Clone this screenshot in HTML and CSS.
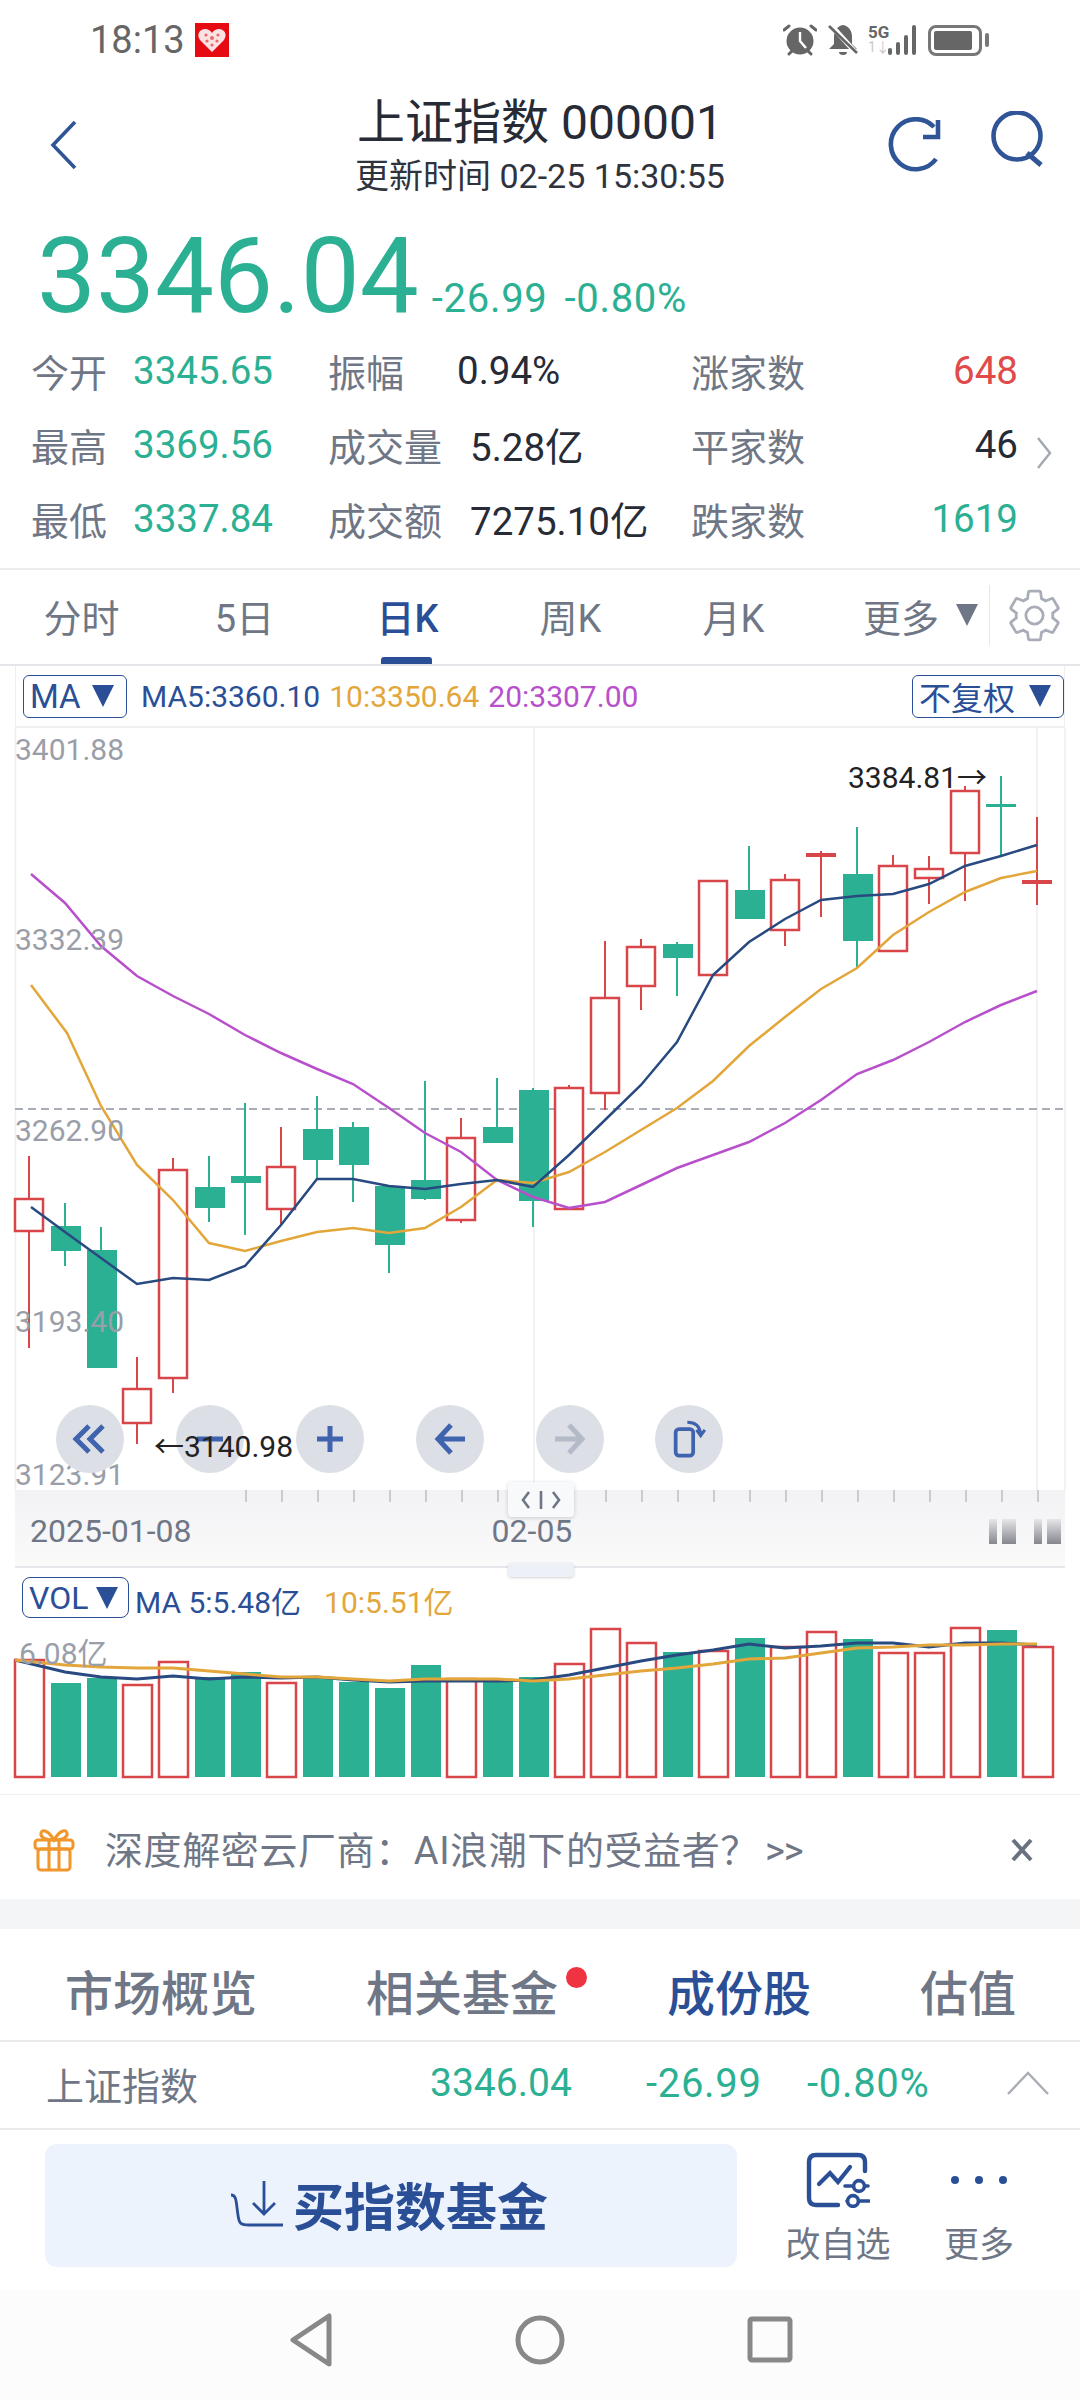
FILE: index.html
```html
<!DOCTYPE html>
<html>
<head>
    <title>上证指数 000001</title>
    <meta name="viewport" content="width=device-width, initial-scale=1">
    <link rel="stylesheet" href="styles.css">
</head>
<body>
    <!-- status bar -->
    <div class="status">
        <span class="clock">18:13</span>
        <svg class="app-badge" viewBox="0 0 34 34">
            <rect width="34" height="34" fill="#e60a12"/>
            <path d="M17 29 L5 17 C1 11 5 6 10 6 C13 6 16 8 17 10 C18 8 21 6 24 6 C29 6 33 11 29 17 Z" fill="#fbe3e4"/>
            <circle cx="11" cy="12" r="1.6" fill="#e86a70"/><circle cx="17" cy="15" r="2" fill="#e86a70"/><circle cx="23" cy="12" r="1.6" fill="#e86a70"/>
            <circle cx="12" cy="18" r="1.6" fill="#e86a70"/><circle cx="22" cy="18" r="1.6" fill="#e86a70"/><circle cx="17" cy="22" r="1.6" fill="#e86a70"/>
        </svg>
        <div class="status-right">
            <svg class="ico-alarm" viewBox="0 0 34 32">
                <circle cx="17" cy="17" r="13.5" fill="#666"/>
                <path d="M17 8 V17 L23 24" fill="none" stroke="#fff" stroke-width="2.4"/>
                <path d="M1 6 L6 2 M33 6 L28 2 M6 30 L9 27 M28 30 L25 27" stroke="#666" stroke-width="3" stroke-linecap="round"/>
            </svg>
            <svg class="ico-bell" viewBox="0 0 30 32">
                <path d="M15 1 C9 2 6 7 6 13 V20 L1 25 H29 L24 20 V13 C24 7 21 2 15 1 Z" fill="#666"/>
                <path d="M11 28 H19 A4 3 0 0 1 11 28 Z" fill="#666"/>
                <path d="M2 0 L29 30" stroke="#fff" stroke-width="5"/>
                <path d="M1 2 L29 29" stroke="#666" stroke-width="2.6"/>
            </svg>
            <div class="net">
                <span class="net-5g">5G</span>
                <span class="net-1">1↓</span>
            </div>
            <div class="signal">
                <i class="s1"></i><i class="s2"></i><i class="s3"></i><i class="s4"></i>
            </div>
            <div class="battery"><div class="battery-fill"></div></div>
            <div class="battery-nub"></div>
        </div>
    </div>

    <!-- title -->
    <div class="head">
        <svg class="back" viewBox="0 0 28 50"><path d="M25 2 L3 25 L25 48" fill="none" stroke="#2f5597" stroke-width="3.6"/></svg>
        <div class="title-box">
            <div class="title">上证指数 000001</div>
            <div class="subtitle">更新时间 02-25 15:30:55</div>
        </div>
        <div class="head-actions">
            <svg class="refresh" viewBox="0 0 56 56">
                <path d="M46 10 A25 25 0 1 0 48 42" fill="none" stroke="#2f5597" stroke-width="4.6"/>
                <path d="M50 3 V20 H35" fill="none" stroke="#2f5597" stroke-width="4.6"/>
            </svg>
            <svg class="search" viewBox="0 0 56 56">
                <circle cx="28" cy="25" r="23.5" fill="none" stroke="#2f5597" stroke-width="4.6"/>
                <path d="M38 42 L52 54" fill="none" stroke="#2f5597" stroke-width="5"/>
            </svg>
        </div>
    </div>

    <!-- price -->
    <div class="quote">
        <span class="price">3346.04</span>
        <span class="delta">-26.99</span>
        <span class="delta">-0.80%</span>
    </div>

    <div class="stats">
        <div class="cell"><span class="lbl">今开</span><span class="green">3345.65</span></div>
        <div class="cell"><span class="lbl lbl-mid lbl-short">振幅</span><span class="dark">0.94%</span></div>
        <div class="cell cell-end"><span class="lbl">涨家数</span><span class="red">648</span></div>
        <div class="cell"><span class="lbl">最高</span><span class="green">3369.56</span></div>
        <div class="cell"><span class="lbl lbl-mid">成交量</span><span class="dark">5.28亿</span></div>
        <div class="cell cell-end"><span class="lbl">平家数</span><span class="dark">46</span></div>
        <div class="cell"><span class="lbl">最低</span><span class="green">3337.84</span></div>
        <div class="cell"><span class="lbl lbl-mid">成交额</span><span class="dark">7275.10亿</span></div>
        <div class="cell cell-end"><span class="lbl">跌家数</span><span class="green">1619</span></div>
        <svg class="stats-more" viewBox="0 0 16 34"><path d="M2 2 L14 17 L2 32" fill="none" stroke="#a3a7b0" stroke-width="2.4"/></svg>
    </div>

    <!-- period tabs -->
    <div class="tabs">
        <div class="tab">分时</div>
        <div class="tab">5日</div>
        <div class="tab tab-on">日K</div>
        <div class="tab">周K</div>
        <div class="tab">月K</div>
        <div class="tab tab-more">更多<i class="tri tri-gray"></i></div>
        <div class="tab-gear">
            <svg class="gear" viewBox="0 0 24 24">
                <path d="M19.14 12.94c.04-.3.06-.61.06-.94 0-.32-.02-.64-.07-.94l2.03-1.58c.18-.14.23-.41.12-.61l-1.92-3.32c-.12-.22-.37-.29-.59-.22l-2.39.96c-.5-.38-1.03-.7-1.62-.94l-.36-2.54c-.04-.24-.24-.41-.48-.41h-3.84c-.24 0-.43.17-.47.41l-.36 2.54c-.59.24-1.13.57-1.62.94l-2.39-.96c-.22-.08-.47 0-.59.22L2.74 8.87c-.12.21-.08.47.12.61l2.03 1.58c-.05.3-.09.63-.09.94s.02.64.07.94l-2.03 1.58c-.18.14-.23.41-.12.61l1.92 3.32c.12.22.37.29.59.22l2.39-.96c.5.38 1.03.7 1.62.94l.36 2.54c.05.24.24.41.48.41h3.84c.24 0 .44-.17.47-.41l.36-2.54c.59-.24 1.13-.56 1.62-.94l2.39.96c.22.08.47 0 .59-.22l1.92-3.32c.12-.22.07-.47-.12-.61l-2.01-1.58z" fill="none" stroke="#a8adb8" stroke-width="1.1"/>
                <circle cx="12" cy="12" r="3.4" fill="none" stroke="#a8adb8" stroke-width="1.1"/>
            </svg>
        </div>
    </div>

    <!-- k line toolbar -->
    <div class="chart-bar">
        <div class="pick pick-ma">MA<i class="tri"></i></div>
        <div class="legend">
            <span class="c-ma5">MA5:3360.10</span>
            <span class="c-ma10">10:3350.64</span>
            <span class="c-ma20">20:3307.00</span>
        </div>
        <div class="pick pick-fq">不复权<i class="tri"></i></div>
    </div>

    <!-- k line chart, coordinates in viewBox are page pixels -->
    <div class="kchart">
        <svg class="kchart-svg" viewBox="0 728 1080 762">
            <g class="grid">
                <line x1="15.5" y1="728" x2="15.5" y2="1490"/>
                <line x1="534" y1="728" x2="534" y2="1490"/>
                <line x1="1037" y1="728" x2="1037" y2="1490"/>
                <line x1="1065" y1="728" x2="1065" y2="1490"/>
            </g>
            <line class="last-line" x1="15" y1="1109" x2="1065" y2="1109"/>

            <g class="wick-r">
                <line x1="29" y1="1156" x2="29" y2="1348"/>
                <line x1="137" y1="1357" x2="137" y2="1444"/>
                <line x1="173" y1="1158" x2="173" y2="1393"/>
                <line x1="281" y1="1127" x2="281" y2="1225"/>
                <line x1="461" y1="1118" x2="461" y2="1223"/>
                <line x1="569" y1="1085" x2="569" y2="1210"/>
                <line x1="605" y1="941" x2="605" y2="1110"/>
                <line x1="641" y1="939" x2="641" y2="1010"/>
                <line x1="785" y1="874" x2="785" y2="946"/>
                <line x1="821" y1="851" x2="821" y2="917"/>
                <line x1="893" y1="855" x2="893" y2="951"/>
                <line x1="929" y1="856" x2="929" y2="904"/>
                <line x1="965" y1="786" x2="965" y2="901"/>
                <line x1="1037" y1="817" x2="1037" y2="905"/>
            </g>
            <g class="wick-g">
                <line x1="65" y1="1203" x2="65" y2="1266"/>
                <line x1="101" y1="1227" x2="101" y2="1368"/>
                <line x1="209" y1="1156" x2="209" y2="1222"/>
                <line x1="245" y1="1103" x2="245" y2="1235"/>
                <line x1="317" y1="1096" x2="317" y2="1178"/>
                <line x1="353" y1="1122" x2="353" y2="1202"/>
                <line x1="389" y1="1186" x2="389" y2="1273"/>
                <line x1="425" y1="1081" x2="425" y2="1200"/>
                <line x1="497" y1="1078" x2="497" y2="1143"/>
                <line x1="533" y1="1088" x2="533" y2="1227"/>
                <line x1="677" y1="942" x2="677" y2="996"/>
                <line x1="749" y1="846" x2="749" y2="919"/>
                <line x1="857" y1="827" x2="857" y2="968"/>
                <line x1="1001" y1="776" x2="1001" y2="855"/>
            </g>
            <g class="body-r">
                <rect x="15" y="1199" width="28" height="32"/>
                <rect x="123" y="1389" width="28" height="34"/>
                <rect x="159" y="1170" width="28" height="208"/>
                <rect x="267" y="1167" width="28" height="42"/>
                <rect x="447" y="1138" width="28" height="82"/>
                <rect x="555" y="1088" width="28" height="121"/>
                <rect x="591" y="998" width="28" height="95"/>
                <rect x="627" y="947" width="28" height="39"/>
                <rect x="699" y="881" width="28" height="94"/>
                <rect x="771" y="880" width="28" height="50"/>
                <rect x="879" y="866" width="28" height="85"/>
                <rect x="915" y="869" width="28" height="9"/>
                <rect x="951" y="791" width="28" height="62"/>
            </g>
            <g class="body-g">
                <rect x="51" y="1226" width="30" height="25"/>
                <rect x="87" y="1250" width="30" height="118"/>
                <rect x="195" y="1187" width="30" height="21"/>
                <rect x="231" y="1176" width="30" height="7"/>
                <rect x="303" y="1129" width="30" height="31"/>
                <rect x="339" y="1127" width="30" height="38"/>
                <rect x="375" y="1186" width="30" height="59"/>
                <rect x="411" y="1180" width="30" height="19"/>
                <rect x="483" y="1127" width="30" height="16"/>
                <rect x="519" y="1090" width="30" height="111"/>
                <rect x="663" y="944" width="30" height="14"/>
                <rect x="735" y="890" width="30" height="29"/>
                <rect x="843" y="874" width="30" height="67"/>
                <rect x="986" y="804" width="30" height="3"/>
            </g>
            <rect class="doji-r" x="806" y="853" width="30" height="4"/>
            <rect class="doji-r" x="1022" y="880" width="30" height="4"/>

            <polyline class="line ma20" points="31,874 65,903 101,946 137,976 173,996 209,1014 245,1035 281,1053 317,1069 353,1084 389,1108 425,1133 461,1152 497,1180 533,1197 569,1208 605,1202 641,1185 677,1168 713,1155 749,1142 785,1123 821,1100 857,1074 893,1060 929,1042 965,1022 1001,1005 1037,991"/>
            <polyline class="line ma10" points="31,985 67,1033 101,1106 137,1165 173,1200 209,1243 245,1251 281,1241 317,1232 353,1228 389,1233 425,1228 461,1207 497,1180 533,1183 569,1172 605,1152 641,1130 677,1108 713,1081 749,1046 785,1017 821,989 857,968 893,935 929,912 965,892 1001,878 1037,871"/>
            <polyline class="line ma5" points="31,1207 65,1232 101,1258 137,1284 173,1278 209,1280 245,1266 281,1225 317,1179 353,1179 389,1186 425,1189 461,1184 497,1180 533,1187 569,1155 605,1120 641,1085 677,1042 713,975 749,942 785,919 821,900 857,896 893,894 929,884 965,866 1001,856 1037,845"/>

            <g class="axis-txt">
                <text x="15" y="760">3401.88</text>
                <text x="15" y="950">3332.39</text>
                <text x="15" y="1141">3262.90</text>
                <text x="15" y="1332">3193.40</text>
                <text x="15" y="1485">3123.91</text>
            </g>
        </svg>

        <div class="tool t1">
            <svg viewBox="0 0 40 40"><path d="M19 7 L6 20 L19 33 M33 7 L20 20 L33 33" fill="none" stroke="#3f63ad" stroke-width="5"/></svg>
        </div>
        <div class="tool t2">
            <svg viewBox="0 0 40 40"><path d="M7 20 H33" fill="none" stroke="#3f63ad" stroke-width="5"/></svg>
        </div>
        <div class="tool t3">
            <svg viewBox="0 0 40 40"><path d="M7 20 H33 M20 7 V33" fill="none" stroke="#3f63ad" stroke-width="5"/></svg>
        </div>
        <div class="tool t4">
            <svg viewBox="0 0 40 40"><path d="M21 6 L8 20 L21 34 M9 20 H35" fill="none" stroke="#3f63ad" stroke-width="5"/></svg>
        </div>
        <div class="tool t5">
            <svg viewBox="0 0 40 40"><path d="M19 6 L32 20 L19 34 M31 20 H5" fill="none" stroke="#b4bac8" stroke-width="5"/></svg>
        </div>
        <div class="tool t6">
            <svg viewBox="0 0 44 48"><rect x="6" y="12" width="21" height="32" rx="4" fill="none" stroke="#3f63ad" stroke-width="4.5"/><path d="M20 4 C30 4 35 9 36 18 M31 13 L36 20 L41 13" fill="none" stroke="#3f63ad" stroke-width="3.6"/></svg>
        </div>

        <span class="mark mark-high">3384.81→</span>
        <span class="mark mark-low">←3140.98</span>
    </div>

    <!-- time axis -->
    <div class="axis-band">
        <div class="ticks"></div>
        <div class="dates">
            <span class="date">2025-01-08</span>
            <span class="date date-mid">02-05</span>
            <div class="fade-marks"><i class="fm-a"></i><i class="fm-b"></i><i class="fm-a"></i><i class="fm-b"></i></div>
        </div>
        <div class="grip">
            <svg viewBox="0 0 44 24"><path d="M10 4 L4 12 L10 20 M34 4 L40 12 L34 20 M22 3 V21" fill="none" stroke="#6f7786" stroke-width="2.6"/></svg>
        </div>
        <div class="grip-low"></div>
    </div>

    <!-- volume -->
    <div class="vol">
        <div class="vol-bar">
            <div class="pick pick-vol">VOL<i class="tri"></i></div>
            <span class="c-ma5">MA 5:5.48亿</span>
            <span class="c-ma10 vol-ten">10:5.51亿</span>
        </div>
        <svg class="vol-svg" viewBox="0 1626 1080 168">
            <g class="vbar-r">
                <rect x="15" y="1660" width="29" height="117"/>
                <rect x="123" y="1685" width="29" height="92"/>
                <rect x="159" y="1662" width="29" height="115"/>
                <rect x="267" y="1683" width="29" height="94"/>
                <rect x="447" y="1679" width="29" height="98"/>
                <rect x="555" y="1664" width="29" height="113"/>
                <rect x="591" y="1629" width="29" height="148"/>
                <rect x="627" y="1643" width="29" height="134"/>
                <rect x="699" y="1651" width="29" height="126"/>
                <rect x="771" y="1647" width="29" height="130"/>
                <rect x="807" y="1632" width="29" height="145"/>
                <rect x="879" y="1653" width="29" height="124"/>
                <rect x="915" y="1653" width="29" height="124"/>
                <rect x="951" y="1628" width="29" height="149"/>
                <rect x="1023" y="1647" width="30" height="130"/>
            </g>
            <g class="vbar-g">
                <rect x="51" y="1683" width="30" height="94"/>
                <rect x="87" y="1678" width="30" height="99"/>
                <rect x="195" y="1677" width="30" height="100"/>
                <rect x="231" y="1672" width="30" height="105"/>
                <rect x="303" y="1677" width="30" height="100"/>
                <rect x="339" y="1682" width="30" height="95"/>
                <rect x="375" y="1688" width="30" height="89"/>
                <rect x="411" y="1665" width="30" height="112"/>
                <rect x="483" y="1680" width="30" height="97"/>
                <rect x="519" y="1677" width="30" height="100"/>
                <rect x="663" y="1652" width="30" height="125"/>
                <rect x="735" y="1638" width="30" height="139"/>
                <rect x="843" y="1639" width="30" height="138"/>
                <rect x="987" y="1630" width="30" height="147"/>
            </g>
            <polyline class="line ma5 vline" points="15,1660 65,1672 101,1677 137,1679 173,1676 209,1679 245,1677 281,1678 317,1677 353,1680 389,1682 425,1681 461,1681 497,1681 533,1680 569,1675 605,1668 641,1661 677,1655 713,1650 749,1644 785,1648 821,1646 857,1643 893,1643 929,1647 965,1643 1001,1643 1037,1645"/>
            <polyline class="line ma10 vline" points="15,1660 65,1665 101,1667 137,1668 173,1668 209,1671 245,1674 281,1677 317,1677 353,1679 389,1681 425,1679 461,1679 497,1679 533,1681 569,1679 605,1675 641,1671 677,1668 713,1664 749,1659 785,1658 821,1653 857,1648 893,1647 929,1645 965,1645 1001,1644 1037,1644"/>
            <text class="vol-max" x="19" y="1664">6.08亿</text>
        </svg>
    </div>

    <!-- ad strip -->
    <div class="banner">
        <svg class="gift" viewBox="0 0 42 44">
            <g fill="none" stroke="#f0962a" stroke-width="3">
                <path d="M21 12 C15 2 9 1 8 5 C7 9 12 12 21 12 C30 12 35 9 34 5 C33 1 27 2 21 12 Z"/>
                <rect x="2" y="12" width="38" height="9" rx="3"/>
                <rect x="5" y="21" width="32" height="21" rx="3"/>
                <path d="M16 12 V42 M26 12 V42"/>
            </g>
        </svg>
        <span class="banner-txt">深度解密云厂商：AI浪潮下的受益者？<span class="banner-more">&gt;&gt;</span></span>
        <svg class="close" viewBox="0 0 24 24"><path d="M3 2 L21 22 M21 2 L3 22" fill="none" stroke="#6a7282" stroke-width="4"/></svg>
    </div>
    <div class="gap"></div>

    <!-- lower tabs -->
    <div class="tabs2">
        <div class="tab2">市场概览</div>
        <div class="tab2">相关基金<i class="dot"></i></div>
        <div class="tab2 tab2-on">成份股</div>
        <div class="tab2">估值</div>
    </div>

    <div class="row">
        <span class="lbl">上证指数</span>
        <span class="green">3346.04</span>
        <span class="green row-chg">-26.99</span>
        <span class="green row-chg">-0.80%</span>
        <svg class="caret" viewBox="0 0 44 24"><path d="M2 23 L22 2 L42 23" fill="none" stroke="#a9adb5" stroke-width="2.4"/></svg>
    </div>

    <!-- bottom actions -->
    <div class="actions">
        <div class="buy">
            <svg class="buy-ico" viewBox="0 0 56 50">
                <path d="M2 16 C8 16 7 24 9 36 C10 45 12 46 20 46 H54" fill="none" stroke="#2a4f97" stroke-width="2.8"/>
                <path d="M35 2 V34 M24 24 L35 35 L46 24" fill="none" stroke="#2a4f97" stroke-width="2.8"/>
            </svg>
            <span class="buy-txt">买指数基金</span>
        </div>
        <div class="act">
            <svg class="act-ico" viewBox="0 0 64 56">
                <path d="M32 53 H10 Q3 53 3 46 V10 Q3 3 10 3 H52 Q59 3 59 10 V19" fill="none" stroke="#2a4f97" stroke-width="4.4" stroke-linecap="round"/>
                <path d="M13 32 L24 21 L32 30 L44 15" fill="none" stroke="#2a4f97" stroke-width="4.2" stroke-linecap="round"/>
                <path d="M39 34 H62 M41 49 H63" stroke="#2a4f97" stroke-width="3.6" stroke-linecap="round"/>
                <circle cx="53" cy="34" r="5.4" fill="#fff" stroke="#2a4f97" stroke-width="3.6"/>
                <circle cx="47" cy="49" r="5.4" fill="#fff" stroke="#2a4f97" stroke-width="3.6"/>
            </svg>
            <span class="act-txt">改自选</span>
        </div>
        <div class="act">
            <div class="dots"><i></i><i></i><i></i></div>
            <span class="act-txt">更多</span>
        </div>
    </div>

    <!-- system nav -->
    <div class="nav">
        <svg class="nav-ico" viewBox="0 0 50 54"><path d="M44 3 V51 L8 27 Z" fill="none" stroke="#888" stroke-width="5" stroke-linejoin="round"/></svg>
        <svg class="nav-ico" viewBox="0 0 50 54"><circle cx="25" cy="27" r="22" fill="none" stroke="#888" stroke-width="5"/></svg>
        <svg class="nav-ico" viewBox="0 0 50 54"><rect x="5" y="6" width="40" height="41" rx="2" fill="none" stroke="#888" stroke-width="5"/></svg>
    </div>
</body>
</html>
```
FILE: styles.css
```css
body
{
    margin: 0;
    width: 1080px;
    background: #fff;
    font-family: Roboto, "Noto Sans CJK SC", sans-serif;
    color: #272b36;
}
i
{
    display: block;
}

/* status bar */
.status
{
    height: 80px;
    display: flex;
    align-items: center;
    padding: 0 91px 0 90px;
    box-sizing: border-box;
}
.clock
{
    font-size: 38px;
    color: #666;
}
.app-badge
{
    width: 34px;
    height: 34px;
    margin-left: 10px;
}
.status-right
{
    margin-left: auto;
    display: flex;
    align-items: center;
}
.ico-alarm
{
    width: 34px;
    height: 32px;
}
.ico-bell
{
    width: 30px;
    height: 32px;
    margin-left: 11px;
}
.net
{
    width: 20px;
    margin-left: 10px;
    display: flex;
    flex-direction: column;
    line-height: 15px;
}
.net-5g
{
    font-size: 17px;
    font-weight: 700;
    color: #666;
}
.net-1
{
    font-size: 14px;
    color: #c9c9c9;
}
.signal
{
    display: flex;
    align-items: flex-end;
    gap: 4px;
    height: 30px;
}
.signal i
{
    width: 4px;
    background: #666;
    border-radius: 2px;
}
.s1 { height: 7px; }
.s2 { height: 13px; }
.s3 { height: 20px; }
.s4 { height: 30px; }
.battery
{
    width: 54px;
    height: 31px;
    box-sizing: border-box;
    margin-left: 12px;
    border: 3px solid #777;
    border-radius: 8px;
    padding: 3px;
}
.battery-fill
{
    width: 38px;
    height: 19px;
    background: #666;
    border-radius: 2px;
}
.battery-nub
{
    width: 4px;
    height: 14px;
    margin-left: 3px;
    background: #777;
    border-radius: 2px;
}

/* title */
.head
{
    height: 130px;
    display: grid;
    grid-template-columns: 1fr auto 1fr;
    align-items: center;
}
.back
{
    width: 28px;
    height: 50px;
    margin-left: 50px;
}
.title-box
{
    text-align: center;
}
.title
{
    font-size: 48px;
    line-height: 56px;
    margin-top: 6px;
}
.subtitle
{
    font-size: 34px;
    line-height: 50px;
    color: #2f333d;
}
.head-actions
{
    display: flex;
    justify-content: flex-end;
    gap: 45px;
    padding-right: 35px;
}
.refresh
{
    width: 56px;
    height: 56px;
}
.search
{
    width: 56px;
    height: 56px;
    margin-top: -6px;
}

/* price */
.quote
{
    height: 123px;
    box-sizing: border-box;
    padding-left: 37px;
    padding-top: 11px;
    display: flex;
    align-items: baseline;
    color: #2cb093;
}
.price
{
    font-size: 105px;
    line-height: 112px;
}
.delta
{
    font-size: 40px;
    letter-spacing: 0.7px;
    margin-left: 13px;
}
.delta + .delta
{
    margin-left: 17px;
}
.stats
{
    display: grid;
    grid-template-columns: 297px 363px 1fr;
    grid-auto-rows: 74px;
    padding-left: 31px;
    font-size: 38.5px;
    position: relative;
    height: 235px;
}
.cell
{
    display: flex;
    align-items: center;
}
.cell-end
{
    justify-content: space-between;
    padding-right: 62px;
}
.lbl
{
    color: #6f7786;
    width: 102px;
    font-size: 38px;
}
.lbl-mid
{
    width: 142px;
}
.lbl-short
{
    width: 129px;
}
.cell-end .lbl
{
    width: auto;
}
.green { color: #2cb093; }
.red { color: #e04a4a; }
.dark { color: #272b36; }
.stats-more
{
    position: absolute;
    left: 1036px;
    top: 103px;
    width: 16px;
    height: 34px;
}

/* period tabs */
.tabs
{
    height: 98px;
    box-sizing: border-box;
    display: flex;
    border-top: 2px solid #ececee;
    border-bottom: 2px solid #e5e6ea;
}
.tab
{
    width: 163px;
    box-sizing: border-box;
    padding-bottom: 4px;
    font-size: 38px;
    color: #6f7786;
    display: flex;
    align-items: center;
    justify-content: center;
    position: relative;
}
.tab-more
{
    justify-content: flex-start;
    padding-left: 48px;
    gap: 17px;
}
.tab-on
{
    color: #2a4f97;
    font-weight: 500;
}
.tab-on::after
{
    content: "";
    position: absolute;
    left: 55px;
    bottom: 0;
    width: 51px;
    height: 7px;
    background: #2a4f97;
    border-radius: 3px 3px 0 0;
}
.tab-gear
{
    flex: 1;
    display: flex;
    align-items: center;
    padding-left: 14px;
    height: 60px;
    align-self: center;
    margin-top: -4px;
    border-left: 1px solid #e6e7ea;
    margin-left: 11px;
}
.gear
{
    width: 61px;
    height: 61px;
    flex: none;
}
.tri
{
    width: 0;
    height: 0;
    border-left: 11px solid transparent;
    border-right: 11px solid transparent;
    border-top: 22px solid #2a4f97;
}
.tri-gray
{
    border-top-color: #6f7786;
}

/* chart toolbar */
.chart-bar
{
    height: 62px;
    box-sizing: border-box;
    margin: 0 15px;
    padding-left: 7px;
    display: flex;
    align-items: center;
    border-left: 1px solid #eee;
    border-right: 1px solid #eee;
    border-bottom: 2px solid #f0f0f2;
    font-size: 30px;
}
.pick
{
    height: 43px;
    box-sizing: border-box;
    border: 1px solid #2a4f97;
    border-radius: 6px;
    display: flex;
    align-items: center;
    color: #2a4f97;
}
.pick-ma
{
    width: 104px;
    padding-left: 6px;
    gap: 11px;
    font-size: 33px;
}
.pick-fq
{
    width: 152px;
    padding-left: 6px;
    gap: 14px;
    margin-left: auto;
    font-size: 32px;
}
.legend
{
    display: flex;
    gap: 9px;
    margin-left: 14px;
}
.c-ma5 { color: #2a4f97; }
.c-ma10 { color: #e3a63a; }
.c-ma20 { color: #b850cc; }

/* k line chart */
.kchart
{
    position: relative;
    z-index: 1;
    height: 762px;
}
.kchart-svg
{
    display: block;
    width: 1080px;
    height: 762px;
    overflow: visible;
}
.grid line
{
    stroke: #eeeeef;
    stroke-width: 1.5;
}
.last-line
{
    stroke: #a9adb8;
    stroke-width: 2;
    stroke-dasharray: 8 5;
}
.wick-r line
{
    stroke: #d9464a;
    stroke-width: 2;
}
.wick-g line
{
    stroke: #2cb093;
    stroke-width: 2;
}
.body-r rect
{
    fill: #fff;
    stroke: #d9464a;
    stroke-width: 2.5;
}
.body-g rect
{
    fill: #2cb093;
}
.doji-r
{
    fill: #d9464a;
}
.line
{
    fill: none;
    stroke-width: 2.5;
}
.ma5 { stroke: #284a80; }
.ma10 { stroke: #e3a63a; }
.ma20 { stroke: #b850cc; }
.axis-txt text
{
    font-size: 30px;
    fill: #9a9ea8;
}
.tool
{
    position: absolute;
    top: 677px;
    width: 68px;
    height: 68px;
    border-radius: 50%;
    background: #dcdfe6;
    display: flex;
    align-items: center;
    justify-content: center;
}
.tool svg
{
    width: 40px;
    height: 40px;
}
.t1 { left: 56px; }
.t2 { left: 176px; }
.t3 { left: 296px; }
.t4 { left: 416px; }
.t5 { left: 536px; }
.t6 { left: 655px; }
.mark
{
    position: absolute;
    font-size: 30px;
    line-height: 36px;
    color: #222;
}
.mark-high
{
    left: 848px;
    top: 32px;
}
.mark-low
{
    left: 154px;
    top: 701px;
}

/* time axis */
.axis-band
{
    height: 78px;
    margin: 0 15px;
    background: linear-gradient(#f2f2f4, #fafafb);
    border-bottom: 2px solid #e6e7ea;
    box-sizing: border-box;
    position: relative;
}
.ticks
{
    height: 12px;
    margin-left: 230px;
    width: 794px;
    background: repeating-linear-gradient(90deg, #c9cbd0 0 2px, transparent 2px 36px);
}
.dates
{
    display: flex;
    align-items: center;
    height: 50px;
    padding-left: 15px;
    font-size: 32px;
    color: #6f7786;
    margin-top: 4px;
}
.date-mid
{
    margin-left: 300px;
}
.fade-marks
{
    margin-left: auto;
    margin-right: 4px;
    display: flex;
    height: 25px;
}
.fade-marks i
{
    background: linear-gradient(#e6e6e9, #85878e);
}
.fm-a
{
    width: 8px;
    margin-right: 5px;
}
.fm-b
{
    width: 14px;
    margin-right: 18px;
}
.fm-b:last-child
{
    margin-right: 0;
}
.grip
{
    position: absolute;
    z-index: 2;
    left: 493px;
    top: -8px;
    width: 66px;
    height: 35px;
    background: #f8f9fb;
    border-radius: 4px;
    box-shadow: 0 1px 4px rgba(0,0,0,0.18);
    display: flex;
    align-items: center;
    justify-content: center;
}
.grip svg
{
    width: 44px;
    height: 24px;
}
.grip-low
{
    position: absolute;
    left: 493px;
    bottom: -11px;
    width: 66px;
    height: 14px;
    background: #eef0f7;
    border-radius: 4px;
    box-shadow: 0 1px 3px rgba(0,0,0,0.18);
}

/* volume */
.vol-bar
{
    height: 58px;
    box-sizing: border-box;
    padding: 9px 0 0 22px;
    display: flex;
    align-items: flex-start;
    font-size: 30px;
}
.vol-bar > span
{
    line-height: 52px;
    margin-left: 6px;
}
.vol-bar > .vol-ten
{
    margin-left: 23px;
}
.pick-vol
{
    width: 107px;
    height: 41px;
    padding-left: 6px;
    gap: 8px;
    font-size: 32px;
    border-radius: 8px;
}
.vol-svg
{
    display: block;
    width: 1080px;
    height: 168px;
}
.vbar-r rect
{
    fill: #fff;
    stroke: #d9464a;
    stroke-width: 2.5;
}
.vbar-g rect
{
    fill: #2cb093;
}
.vline
{
    stroke-width: 3;
}
.vol-max
{
    font-size: 30px;
    fill: #9a9ea8;
}

/* ad strip */
.banner
{
    height: 105px;
    box-sizing: border-box;
    border-top: 1px solid #f0f0f2;
    padding-left: 33px;
    display: flex;
    align-items: center;
}
.gift
{
    width: 42px;
    height: 44px;
    margin-top: 6px;
}
.banner-txt
{
    font-size: 38px;
    letter-spacing: 0.6px;
    color: #6f7786;
    margin-left: 30px;
}
.banner-more
{
    margin-left: 6px;
    letter-spacing: -1px;
}
.close
{
    width: 24px;
    height: 24px;
    margin-left: auto;
    margin-right: 46px;
    margin-top: 6px;
}
.gap
{
    height: 30px;
    background: #f4f5f7;
}

/* lower tabs */
.tabs2
{
    height: 111px;
    box-sizing: border-box;
    padding: 10px 0 0 65px;
    display: flex;
    align-items: center;
    gap: 109px;
    font-size: 48px;
    color: #6f7786;
    font-weight: 500;
}
.tab2
{
    position: relative;
}
.tab2-on
{
    color: #2a4f97;
}
.dot
{
    position: absolute;
    right: -29px;
    top: 12px;
    width: 21px;
    height: 21px;
    border-radius: 50%;
    background: #ef3340;
}
.row
{
    height: 90px;
    box-sizing: border-box;
    border-top: 2px solid #e9e9ec;
    border-bottom: 2px solid #e9e9ec;
    padding: 0 0 4px 46px;
    display: grid;
    grid-template-columns: 384px 216px 161px 199px auto;
    align-items: center;
    font-size: 39px;
}
.row .lbl
{
    width: auto;
}
.row-chg
{
    font-size: 40px;
    letter-spacing: 0.7px;
}
.caret
{
    width: 44px;
    height: 24px;
}

/* bottom actions */
.actions
{
    height: 160px;
    box-sizing: border-box;
    padding: 14px 0 0 45px;
    display: flex;
    align-items: flex-start;
}
.buy
{
    width: 692px;
    height: 123px;
    background: #ecf3fd;
    border-radius: 12px;
    display: flex;
    align-items: center;
    justify-content: center;
    gap: 8px;
    padding: 0 5px 3px 0;
    box-sizing: border-box;
}
.buy-ico
{
    width: 56px;
    height: 50px;
}
.buy-txt
{
    font-size: 51px;
    font-weight: 700;
    color: #2a4f97;
}
.act
{
    width: 128px;
    margin-left: 13px;
    padding-top: 8px;
    display: flex;
    flex-direction: column;
    align-items: center;
}
.buy + .act
{
    margin-left: 37px;
}
.act-ico
{
    width: 64px;
    height: 56px;
}
.dots
{
    height: 56px;
    display: flex;
    align-items: center;
    gap: 16px;
}
.dots i
{
    width: 8px;
    height: 8px;
    border-radius: 50%;
    background: #2a4f97;
}
.act-txt
{
    font-size: 35px;
    line-height: 50px;
    margin-top: 13px;
    color: #6f7786;
}

/* system nav */
.nav
{
    height: 110px;
    box-sizing: border-box;
    padding-bottom: 10px;
    background: #fcfcfc;
    display: flex;
    align-items: center;
    justify-content: center;
    gap: 180px;
}
.nav-ico
{
    width: 50px;
    height: 54px;
}
```
